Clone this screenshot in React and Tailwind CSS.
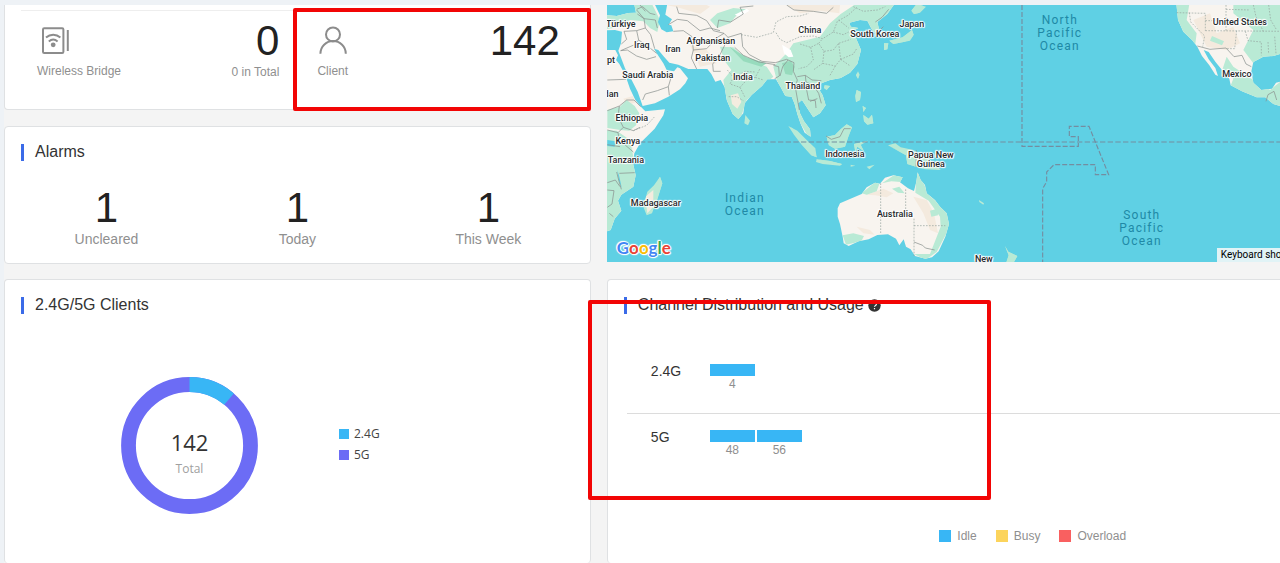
import React from "react";

// Map drawing units: three per pixel.
const MAINLAND =
  "M100 0 L108 38 L85 39 L50 48 L0 44 L0 92 L45 90 L66 95 L63 130 L55 152 L62 170 L75 205 L95 240 L113 275 L128 318 L165 310 L205 290 L240 268 L256 250 L264 235 L240 205 L232 202 L222 214 L200 210 L190 190 L170 160 L162 146 L175 150 L192 170 L208 188 L235 194 L265 207 L322 207 L334 222 L346 245 L362 240 L374 262 L380 300 L398 342 L415 357 L430 340 L434 310 L455 285 L486 258 L502 238 L528 238 L542 262 L556 288 L575 290 L584 312 L592 342 L602 372 L614 398 L632 410 L630 388 L612 364 L600 340 L594 310 L606 300 L624 328 L640 352 L660 340 L677 316 L668 286 L655 265 L664 250 L690 240 L722 234 L750 218 L772 192 L783 150 L768 115 L754 96 L775 84 L752 80 L748 68 L780 60 L802 62 L812 82 L822 98 L838 92 L832 66 L862 42 L892 0 Z";
const AFRICA =
  "M0 150 L46 150 L54 166 L48 180 L58 192 L76 226 L90 266 L106 300 L124 322 L136 334 L195 328 L190 346 L164 386 L120 430 L103 460 L99 490 L107 526 L100 560 L64 584 L54 602 L64 632 L44 656 L32 690 L0 700 Z";
const AUSTRALIA =
  "M713 625 L720 610 L755 595 L785 582 L800 562 L825 548 L840 551 L855 533 L880 526 L908 532 L900 547 L924 565 L942 573 L949 545 L953 517 L962 540 L975 555 L980 580 L1005 600 L1020 620 L1040 640 L1047 672 L1036 710 L1016 754 L996 772 L976 776 L945 768 L932 748 L918 740 L911 718 L898 736 L888 716 L864 703 L832 705 L806 718 L776 724 L746 738 L731 730 L728 710 L720 672 L713 650 Z";
const AMERICA =
  "M1728 0 L1734 60 L1750 95 L1776 120 L1792 140 L1806 168 L1828 196 L1846 224 L1854 228 L1846 204 L1826 178 L1811 150 L1826 156 L1846 185 L1866 210 L1888 236 L1892 256 L1926 274 L1970 292 L1996 292 L2020 312 L2060 324 L2060 240 L2028 248 L2016 266 L1984 270 L1960 248 L1954 214 L1960 186 L1990 170 L2020 168 L2060 156 L2060 0 Z";
const ISLANDS =
  "M180 530 L187 550 L172 598 L156 640 L140 646 L130 620 L142 575 L162 556 Z M436 345 L450 362 L444 376 L433 370 Z M565 378 L592 392 L620 420 L646 445 L650 472 L634 466 L606 436 L582 404 Z M650 478 L690 483 L726 492 L720 497 L668 492 L648 486 Z M680 410 L705 405 L722 388 L740 373 L756 382 L745 410 L735 440 L705 446 L686 436 Z M762 432 L804 422 L782 434 L792 454 L772 440 L766 456 Z M864 436 L886 430 L902 442 L940 450 L980 470 L1022 510 L975 508 L948 500 L922 492 L918 466 Z M770 270 L783 276 L780 300 L768 306 L766 288 Z M790 345 L806 356 L816 344 L820 370 L802 374 L792 364 Z M774 214 L779 224 L774 236 L768 226 Z M674 256 L690 258 L680 270 L672 264 Z M852 130 L865 130 L862 148 L852 150 Z M868 122 L908 112 L936 90 L941 104 L930 122 L880 132 Z M934 32 L950 12 L978 20 L960 38 L942 42 Z M1215 738 L1225 755 L1252 768 L1240 790 L1218 790 L1226 766 Z M1137 600 L1152 610 L1150 614 L1138 606 Z M752 494 L766 497 L752 500 Z M800 500 L824 494 L808 508 Z M788 318 L798 324 L790 336 Z";

const PATCHES = [
  "M0 0 L0 90 L40 84 L90 60 L130 64 L150 84 L172 96 L180 60 L150 0 Z",
  "M330 60 L352 40 L400 24 L440 28 L410 46 L390 70 L352 84 Z",
  "M360 140 L372 180 L394 210 L370 240 L374 270 L392 350 L420 360 L440 300 L520 230 L500 200 L440 180 L400 142 Z",
  "M520 200 L560 160 L580 130 L620 120 L660 110 L690 70 L722 42 L770 10 L900 0 L850 80 L790 120 L790 200 L700 250 L690 350 L630 420 L590 350 L560 300 L530 240 Z",
  "M22 330 L60 320 L80 300 L104 318 L118 340 L108 376 L88 392 L60 390 L22 384 Z",
  "M0 390 L50 392 L90 420 L110 520 L110 570 L60 590 L66 640 L30 700 L0 700 Z",
  "M180 525 L190 550 L172 600 L160 610 L166 570 Z",
  "M565 370 L660 480 L740 500 L700 450 L670 410 L740 360 L770 390 L820 420 L1030 510 L920 500 L780 460 L640 480 Z",
  "M765 205 L790 265 L830 380 L780 370 L760 270 Z",
  "M840 110 L930 84 L980 0 L940 0 L930 60 L944 110 L850 160 Z",
  "M785 580 L826 546 L838 552 L830 574 L800 584 Z M846 550 L884 524 L912 530 L902 546 L874 544 Z M876 566 L898 560 L914 580 L894 578 Z M946 578 L950 514 L965 534 L984 582 L1042 636 L1050 680 L1010 756 L976 780 L942 762 L990 762 L1022 680 L1020 650 L986 602 Z M728 706 L760 700 L792 708 L784 724 L738 734 Z M990 632 L1012 626 L1014 646 L994 650 Z",
  "M1720 0 L1770 0 L1760 60 L1790 100 L1786 132 L1740 100 Z M1900 0 L2060 0 L2060 170 L1960 190 L1930 150 L1960 90 L1900 40 Z M1880 170 L1900 200 L1960 240 L2010 270 L2060 230 L2060 330 L1890 262 L1900 236 L1868 206 Z M1836 108 L1872 124 L1866 136 L1830 122 Z",
  "M1210 730 L1260 760 L1240 790 L1215 790 Z",
];

const TANS = [
  "M200 15 L240 24 L300 42 L330 20 L320 15 Z",
  "M70 296 L98 288 L108 306 L84 316 Z",
  "M560 15 L720 15 L718 40 L660 32 L600 40 Z",
  "M270 136 L320 150 L350 190 L300 200 Z",
  "M392 280 L418 276 L424 316 L404 322 Z",
  "M60 430 L100 420 L96 456 L70 448 Z",
  "M800 584 L850 566 L880 580 L860 592 L826 586 Z M940 590 L980 600 L1002 640 L1014 700 L990 690 L970 640 Z M770 680 L810 690 L824 704 L790 700 Z",
  "M1780 60 L1830 40 L1850 100 L1900 80 L1920 130 L1880 150 L1820 140 Z",
];

const BORDERS =
  "M112 42 L132 56 L136 84 L110 92 L72 94 M110 92 L116 120 L104 134 L62 152 M116 120 L150 144 L170 160 M72 94 L80 118 L64 132 M62 152 L82 150 L110 168 L140 178 L168 170 M136 84 L152 104 L164 146 M132 56 L110 30 M132 56 L166 60 L172 84 M110 28 L128 20 L150 40 L166 44 M120 15 L136 34 M205 74 L232 58 L262 62 L300 92 L330 84 L360 92 M230 20 L236 40 L290 46 L320 62 L340 92 M220 94 L250 92 L276 110 L280 150 L274 174 L290 207 M280 150 L320 146 L352 112 L372 100 L340 92 M372 100 L384 112 L372 140 L358 168 L338 192 L340 214 L362 214 M352 84 L356 60 L392 66 L430 42 L420 22 L460 18 M384 112 L424 100 L428 140 L448 164 L486 184 L526 188 L560 178 L582 188 M404 142 L430 166 L476 186 L526 194 M520 196 L536 200 L538 228 L524 236 M540 228 L548 200 L564 180 M582 188 L580 214 L592 240 L586 262 L598 330 M592 230 L616 226 L636 240 L664 242 M616 226 L618 246 L640 256 L656 280 L664 310 M600 250 L620 270 L626 300 L646 302 L648 324 M630 304 L652 296 M560 15 L582 30 L640 34 L680 40 L700 22 M128 300 L136 282 L172 272 L205 260 L214 230 M205 260 L208 286 M22 240 L78 238 M22 332 L58 318 L80 300 L102 300 L122 320 M58 318 L54 350 L70 382 L100 392 L120 382 M70 382 L54 398 L58 420 L100 456 M22 390 L54 398 M22 434 L60 440 M22 548 L46 540 L60 560 M58 520 L104 518 M50 516 L56 540 L64 568 M22 570 L42 572 L36 612 L22 622 M28 640 L40 650 M678 408 L694 418 L720 410 L732 386 L752 386 M949 450 L948 500 M1792 138 L1830 148 L1878 144 L1902 170 L1926 166 L1938 192 L1954 200 M1998 304 L2004 284 L2022 274 L2030 300 M826 66 L846 52 L866 28 M838 92 L850 80 M942 726 L968 736 L976 744 L1004 750";

const DOTTED =
  "M424 104 L470 112 L520 98 L528 66 L560 50 L600 48 L626 40 M528 98 L540 118 L560 128 M560 128 L600 110 L640 108 L668 116 L700 96 L712 64 L744 46 L772 20 M600 132 L632 142 L656 130 L672 154 L700 150 L716 130 L752 118 M656 130 L668 116 M632 142 L640 180 L620 200 L596 206 M672 154 L668 190 L640 210 M668 190 L706 198 L722 178 L716 130 M722 178 L748 196 M706 198 L690 226 M722 178 L760 162 L770 146 M700 96 L730 104 L746 96 M716 60 L746 84 M760 20 L790 34 L832 30 L856 20 M382 210 L400 232 L390 252 L420 262 L440 240 L466 232 L480 206 M420 262 L434 290 M400 232 L436 214 L466 216 M386 290 L410 290 L430 302 M466 232 L490 240 M842 550 L842 702 M917 568 L917 640 M942 656 L942 768 M942 677 L1036 677 M1730 38 L1816 40 L1816 92 M1768 38 L1772 66 L1814 108 L1808 140 M1816 92 L2060 94 M1910 92 L1904 146 L1880 146 M1878 15 L1878 94 M1816 62 L1878 62 M1936 94 L1944 122 L1984 126 L1984 166 M1960 15 L1968 50 L1990 94 M2006 15 L2012 60 L2030 90 M2004 126 L2006 162 M2024 110 L2028 160 M1878 28 L1950 30 M1910 60 L1970 62 M100 392 L140 376 L164 350";

const LABELS = [
  { text: "Türkiye", x: 14, y: 19 },
  { text: "Iraq", x: 35, y: 40 },
  { text: "Iran", x: 66, y: 44 },
  { text: "Afghanistan", x: 104, y: 36 },
  { text: "Pakistan", x: 106, y: 53 },
  { text: "China", x: 203, y: 25 },
  { text: "Egypt", x: -3, y: 55 },
  { text: "Saudi Arabia", x: 41, y: 70 },
  { text: "India", x: 136, y: 72 },
  { text: "Thailand", x: 196, y: 81 },
  { text: "Sudan", x: -1, y: 89 },
  { text: "Ethiopia", x: 25, y: 113 },
  { text: "Kenya", x: 21, y: 136 },
  { text: "Tanzania", x: 19, y: 155 },
  { text: "Madagascar", x: 49, y: 198 },
  { text: "Indonesia", x: 238, y: 149 },
  { text: "South Korea", x: 268, y: 29 },
  { text: "Japan", x: 305, y: 19 },
  { text: "Papua New\nGuinea", x: 324, y: 155 },
  { text: "Australia", x: 288, y: 209 },
  { text: "New", x: 377, y: 254 },
  { text: "United States", x: 633, y: 17 },
  { text: "Mexico", x: 630, y: 69 },
];

const OCEANS = [
  { text: "Indian\nOcean", x: 138, y: 200 },
  { text: "North\nPacific\nOcean", x: 453, y: 28 },
  { text: "South\nPacific\nOcean", x: 535, y: 223 },
];

const HALO =
  "[text-shadow:0_0_1px_#fff,1px_0_1px_#fff,-1px_0_1px_#fff,0_1px_1px_#fff,0_-1px_1px_#fff,1px_1px_1px_#fff,-1px_-1px_1px_#fff]";

function WorldMap() {
  return (
    <section aria-label="Map" className="relative h-[257px] overflow-hidden bg-[#5fd0e4] font-['Roboto',sans-serif]">
      <svg className="block h-full w-full" viewBox="21 15 2559 771" preserveAspectRatio="xMinYMin slice" aria-hidden="true">
        <defs>
          <clipPath id="land">
            <path d={MAINLAND} />
            <path d={AFRICA} />
            <path d={AUSTRALIA} />
            <path d={AMERICA} />
            <path d={ISLANDS} />
          </clipPath>
        </defs>
        <g fill="#f8f4ef">
          <path d={MAINLAND} />
          <path d={AFRICA} />
          <path d={AUSTRALIA} />
          <path d={AMERICA} />
        </g>
        <path d={ISLANDS} fill="#b9ead5" />
        <g clipPath="url(#land)">
          {TANS.map((d) => (
            <path key={d} d={d} fill="#f4eade" />
          ))}
          {PATCHES.map((d) => (
            <path key={d} d={d} fill="#b9ead5" />
          ))}
          <path d="M546 190 L572 182 L584 200 L576 226 L556 222 Z M388 140 L440 172 L500 190 L484 200 L430 184 Z" fill="#97dbbd" />
          <path d="M392 286 L414 280 L424 306 L412 326 L396 312 Z" fill="#f4ecdf" />
          <path d="M136 590 L160 570 L160 620 L142 640 Z" fill="#f4ecdf" />
          <path d="M546 134 L572 150 L580 170 L566 172 L552 160 Z M404 44 L440 26 L448 32 L420 50 Z" fill="#ffffff" />
        </g>
        <path d="M158 0 L180 46 L174 66 L184 88 L200 97 L220 94 L214 76 L206 74 L216 58 L196 44 L204 0 Z" fill="#5fd0e4" />
        <path d="M22 420 L46 424 L44 440 L22 438 Z M52 510 L58 530 L66 566 L56 540 Z" fill="#5fd0e4" />
        <path d={BORDERS} fill="none" stroke="#8b918f" strokeWidth="2.2" strokeLinejoin="round" />
        <path d={DOTTED} fill="none" stroke="#93a09b" strokeWidth="2" strokeDasharray="5 4" />
        <g fill="none" stroke="#748da0" strokeWidth="3.4">
          <path d="M120 426 H2580" strokeDasharray="16 7" />
          <path
            d="M1266 15 V439 H1435 V410 H1408 V379 H1467 L1526 524 H1486 V494 H1362 L1340 516 V545 L1328 566 V786"
            strokeDasharray="15 6"
          />
        </g>
      </svg>

      {LABELS.map(({ text, x, y }) => (
        <span
          key={text}
          className={`absolute -translate-x-1/2 -translate-y-1/2 text-center text-[9px] leading-[9px] font-medium whitespace-pre text-[#26292c] ${HALO}`}
          style={{ left: x, top: y }}
        >
          {text}
        </span>
      ))}
      {OCEANS.map(({ text, x, y }) => (
        <span
          key={text}
          className="absolute -translate-x-1/2 -translate-y-1/2 text-center text-[12px] leading-[13px] tracking-widest whitespace-pre text-[#2089a6]"
          style={{ left: x, top: y }}
        >
          {text}
        </span>
      ))}

      <a
        href="#google-maps"
        aria-label="Google"
        className={`absolute bottom-1 left-[10px] font-['Lato',sans-serif] text-[17px] leading-5 font-bold ${HALO}`}
      >
        <span className="text-[#4285f4]">G</span>
        <span className="text-[#ea4335]">o</span>
        <span className="text-[#fbbc04]">o</span>
        <span className="text-[#4285f4]">g</span>
        <span className="text-[#34a853]">l</span>
        <span className="text-[#ea4335]">e</span>
      </a>
      <button type="button" className="absolute bottom-0 left-[610px] bg-[#e1f3f6] px-1 text-[10px] leading-[14px] whitespace-nowrap text-black">
        Keyboard shortcuts
      </button>
    </section>
  );
}

function Heading({ children }) {
  return (
    <div className="flex items-center gap-[11px] px-4 pt-[13px]">
      <span className="h-[17px] w-[3px] bg-[#3b6be8]" />
      <h2 className="flex items-center gap-1 text-base leading-6 text-[#333]">{children}</h2>
    </div>
  );
}

function BridgeIcon() {
  return (
    <svg width="32" height="32" viewBox="0 0 32 32" fill="none" stroke="#8c8c8c" strokeWidth="2" aria-hidden="true">
      <rect x="6" y="3.2" width="20.4" height="24.8" rx="1.2" />
      <path d="M30.800 5v21" />
      <path d="M9 12.400c4.200-3.700 10.200-3.700 14.400 0M11.800 16.400c2.600-2.200 6.200-2.200 8.800 0" />
      <circle cx="16.200" cy="19.800" r="2.400" fill="#8c8c8c" stroke="none" />
    </svg>
  );
}

function ClientIcon() {
  return (
    <svg width="32" height="32" viewBox="0 0 32 32" fill="none" stroke="#8c8c8c" strokeWidth="2" aria-hidden="true">
      <circle cx="16" cy="9.400" r="7" />
      <path d="M3.400 28.800a12.700 12.700 0 0 1 25.400 0" />
    </svg>
  );
}

function Device({ icon, name, count, detail }) {
  return (
    <div className="flex justify-between px-4">
      <div className="flex flex-col gap-[5px] pt-[6px] text-xs leading-[18px] text-[#8f8f8f]">
        {icon}
        <span>{name}</span>
      </div>
      <div className="text-right">
        <div className="text-[42px] leading-[44px] text-[#222]">{count}</div>
        {detail && <div className="text-xs leading-[18px] text-[#8f8f8f]">{detail}</div>}
      </div>
    </div>
  );
}

const ALARMS = [
  ["1", "Uncleared"],
  ["1", "Today"],
  ["1", "This Week"],
];

function Donut() {
  const r = 61;
  const length = 2 * Math.PI * r;
  const share = 0.112;
  return (
    <div className="relative size-[137px]">
      <svg className="size-full -rotate-90" viewBox="0 0 137 137" fill="none" strokeWidth="14.800" aria-hidden="true">
        <circle cx="68.500" cy="68.500" r={r} stroke="#6c6cf5" />
        <circle cx="68.500" cy="68.500" r={r} stroke="#38b6f5" strokeDasharray={`${length * share} ${length}`} />
      </svg>
      <div className="absolute inset-0 flex flex-col items-center justify-center pt-4 font-['Open_Sans',sans-serif]">
        <span className="text-[22px] leading-[30px] text-[#333]">142</span>
        <span className="text-xs leading-6 text-[#a0a0a0]">Total</span>
      </div>
    </div>
  );
}

const CHANNELS = [
  { band: "2.4G", channels: ["4"] },
  { band: "5G", channels: ["48", "56"] },
];

function InfoIcon() {
  return (
    <svg width="13" height="13" viewBox="0 0 13 13" aria-label="Help">
      <circle cx="6.500" cy="6.500" r="6.200" fill="#333" />
      <path d="M4.600 5a1.900 1.900 0 1 1 2.700 1.700c-.6.300-.8.500-.8 1.100M6.500 9v1.300" stroke="#fff" strokeWidth="1.200" fill="none" />
    </svg>
  );
}

export default function App() {
  return (
    <div className="min-h-screen overflow-hidden bg-[#eef2f6] pt-[5px] pl-1 font-['Liberation_Sans',Arial,sans-serif]">
      <main className="grid w-[114%] grid-cols-[587fr_852fr] gap-x-4 gap-y-[15px] bg-[#f4f4f4]">
        <div className="flex flex-col gap-4">
          <section className="relative h-[105px] rounded-b border border-t-0 border-[#dfe1e3] bg-white pt-[5px] pr-[14px] pl-4">
            <div className="h-px bg-[#eeeeee]" />
            <div className="grid grid-cols-2 gap-x-[6px] pt-2">
              <Device icon={<BridgeIcon />} name="Wireless Bridge" count="0" detail="0 in Total" />
              <Device icon={<ClientIcon />} name="Client" count="142" />
            </div>
            <div className="pointer-events-none absolute top-[3px] -right-px h-[103px] w-[298px] rounded-xs border-4 border-[#f20505]" />
          </section>

          <section className="h-[138px] rounded border border-[#dfe1e3] bg-white">
            <Heading>Alarms</Heading>
            <dl className="grid grid-cols-3 px-[6px] pt-[22px] text-center">
              {ALARMS.map(([count, label]) => (
                <div key={label} className="flex flex-col-reverse">
                  <dt className="text-sm leading-[18px] text-[#8f8f8f]">{label}</dt>
                  <dd className="text-[42px] leading-[44px] text-[#222]">{count}</dd>
                </div>
              ))}
            </dl>
          </section>
        </div>

        <WorldMap />

        <section className="rounded border border-b-0 border-[#dfe1e3] bg-white">
          <Heading>2.4G/5G Clients</Heading>
          <div className="flex items-center gap-[81px] pt-[60px] pl-[116px]">
            <Donut />
            <ul className="pb-[3px] font-['Open_Sans',sans-serif] text-xs leading-[21px] text-[#444]">
              <li className="flex items-center gap-[5px]">
                <span className="size-[10px] bg-[#38b6f5]" />
                2.4G
              </li>
              <li className="flex items-center gap-[5px]">
                <span className="size-[10px] bg-[#6c6cf5]" />
                5G
              </li>
            </ul>
          </div>
        </section>

        <section className="relative rounded border border-b-0 border-[#dfe1e3] bg-white pb-[18px]">
          <Heading>
            Channel Distribution and Usage
            <InfoIcon />
          </Heading>
          <div className="divide-y divide-[#dcdcdc] pt-[31px] pl-[19px]">
            {CHANNELS.map(({ band, channels }) => (
              <div key={band} className="flex h-[66px] pt-[13px] pl-6">
                <span className="w-[59px] text-sm leading-5 text-[#333]">{band}</span>
                <ul className="flex gap-[2px] pt-[3px]">
                  {channels.map((channel) => (
                    <li key={channel} className="w-[45px] text-center text-xs leading-4 text-[#8f8f8f]">
                      <span className="block h-3 bg-[#38b6f5]" />
                      {channel}
                    </li>
                  ))}
                </ul>
              </div>
            ))}
          </div>
          <ul className="flex justify-center gap-[19px] pt-[47px] text-xs leading-[18px] text-[#8f8f8f]">
            <li className="flex items-center gap-[6px]">
              <span className="size-3 bg-[#38b6f5]" />
              Idle
            </li>
            <li className="flex items-center gap-[6px]">
              <span className="size-3 bg-[#fcd45c]" />
              Busy
            </li>
            <li className="flex items-center gap-[6px]">
              <span className="size-3 bg-[#f96060]" />
              Overload
            </li>
          </ul>
          <div className="pointer-events-none absolute top-5 -left-5 h-[200px] w-[403px] rounded-xs border-4 border-[#f20505]" />
        </section>
      </main>
    </div>
  );
}
